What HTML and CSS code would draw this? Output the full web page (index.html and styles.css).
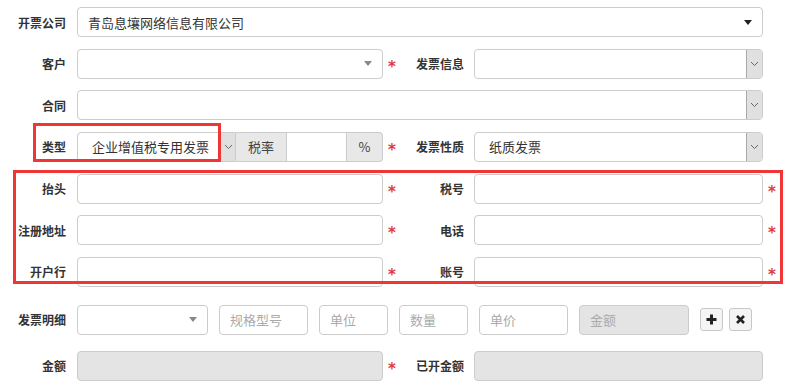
FILE: index.html
```html
<!DOCTYPE html>
<html lang="zh-CN">
<head>
    <meta charset="UTF-8">
    <title>开票</title>
    <link rel="stylesheet" href="styles.css">
</head>
<body>
    <div class="invoice-form">
        <div class="row">
            <label class="lbl c1">开票公司</label>
            <div class="ctl wide select2"><span class="val">青岛息壤网络信息有限公司</span><span class="caret dark"></span></div>
        </div>

        <div class="row">
            <label class="lbl c1">客户</label>
            <div class="ctl c2 select2"><span class="val"></span><span class="caret"></span></div>
            <span class="req c3">*</span>
            <label class="lbl lbl-r c4">发票信息</label>
            <div class="ctl c5 native"><span class="val"></span><span class="chev"><svg width="9" height="6" viewBox="0 0 9 6"><polyline points="1,1 4.5,4.5 8,1" fill="none" stroke="#666" stroke-width="1"/></svg></span></div>
        </div>

        <div class="row">
            <label class="lbl c1">合同</label>
            <div class="ctl wide native"><span class="val"></span><span class="chev"><svg width="9" height="6" viewBox="0 0 9 6"><polyline points="1,1 4.5,4.5 8,1" fill="none" stroke="#666" stroke-width="1"/></svg></span></div>
        </div>

        <div class="row">
            <label class="lbl c1">类型</label>
            <div class="group c2">
                <div class="ctl native type-sel"><span class="val">企业增值税专用发票</span><span class="chev"><svg width="9" height="6" viewBox="0 0 9 6"><polyline points="1,1 4.5,4.5 8,1" fill="none" stroke="#666" stroke-width="1"/></svg></span></div>
                <span class="addon rate-lbl">税率</span>
                <div class="ctl rate-in"></div>
                <span class="addon pct">%</span>
            </div>
            <span class="req c3">*</span>
            <label class="lbl lbl-r c4">发票性质</label>
            <div class="ctl c5 native"><span class="val">纸质发票</span><span class="chev"><svg width="9" height="6" viewBox="0 0 9 6"><polyline points="1,1 4.5,4.5 8,1" fill="none" stroke="#666" stroke-width="1"/></svg></span></div>
        </div>

        <div class="row">
            <label class="lbl c1">抬头</label>
            <div class="ctl c2"></div>
            <span class="req c3">*</span>
            <label class="lbl lbl-r c4">税号</label>
            <div class="ctl c5"></div>
            <span class="req c6">*</span>
        </div>

        <div class="row">
            <label class="lbl c1">注册地址</label>
            <div class="ctl c2"></div>
            <span class="req c3">*</span>
            <label class="lbl lbl-r c4">电话</label>
            <div class="ctl c5"></div>
            <span class="req c6">*</span>
        </div>

        <div class="row">
            <label class="lbl c1">开户行</label>
            <div class="ctl c2"></div>
            <span class="req c3">*</span>
            <label class="lbl lbl-r c4">账号</label>
            <div class="ctl c5"></div>
            <span class="req c6">*</span>
        </div>

        <div class="row detail-row">
            <label class="lbl c1">发票明细</label>
            <div class="detail">
                <div class="ctl select2 d-item"><span class="val"></span><span class="caret"></span></div>
                <div class="ctl d-spec"><span class="ph">规格型号</span></div>
                <div class="ctl d-unit"><span class="ph">单位</span></div>
                <div class="ctl d-unit"><span class="ph">数量</span></div>
                <div class="ctl d-spec"><span class="ph">单价</span></div>
                <div class="ctl off d-sum"><span class="ph">金额</span></div>
                <button class="icon-btn add"><svg width="11" height="11" viewBox="0 0 11 11"><path d="M5.5 0.5v10M0.5 5.5h10" stroke="#222" stroke-width="3"/></svg></button>
                <button class="icon-btn del"><svg width="9" height="9" viewBox="0 0 9 9"><path d="M1 1l7 7M8 1l-7 7" stroke="#222" stroke-width="2.6"/></svg></button>
            </div>
        </div>

        <div class="row total-row">
            <label class="lbl c1">金额</label>
            <div class="ctl c2 off"></div>
            <span class="req c3">*</span>
            <label class="lbl lbl-r c4">已开金额</label>
            <div class="ctl c5 off"></div>
        </div>

        <!-- annotation frames -->
        <div class="mark mark-type"></div>
        <div class="mark mark-title"></div>
    </div>
</body>
</html>
```

FILE: styles.css
```css
* {
    margin: 0;
    padding: 0;
    box-sizing: border-box;
}

body {
    font-family: "Noto Sans CJK SC", "Liberation Sans", sans-serif;
    background: #fff;
    color: #333;
    width: 804px;
    height: 389px;
    overflow: hidden;
}

.invoice-form {
    position: relative;
    padding-top: 7px;
}

.row {
    display: grid;
    grid-template-columns: 77px 306px 22px 69px 289px 22px;
    height: 30px;
    margin-bottom: 11.67px;
    align-items: center;
}

.detail-row {
    margin-top: 18px;
    margin-bottom: 16px;
}

.c1 { grid-column: 1; }
.c2 { grid-column: 2; }
.c3 { grid-column: 3; }
.c4 { grid-column: 4; }
.c5 { grid-column: 5; }
.c6 { grid-column: 6; }
.wide { grid-column: 2 / 6; }

.lbl {
    font-size: 12px;
    font-weight: bold;
    color: #333;
    text-align: right;
    padding-right: 11px;
    white-space: nowrap;
}

.lbl-r {
    padding-right: 10px;
}

.req {
    color: #e03b3b;
    font-family: "DejaVu Sans", sans-serif;
    font-weight: bold;
    font-size: 15px;
    padding-left: 5px;
    line-height: 1;
    padding-top: 7px;
}

.ctl {
    height: 30px;
    border: 1px solid #ccc;
    border-radius: 4px;
    background: #fff;
    display: flex;
    align-items: center;
    font-size: 13px;
    color: #333;
    position: relative;
}

.ctl .val {
    flex: 1;
    padding-left: 10px;
    white-space: nowrap;
    overflow: hidden;
}

.native .val {
    padding-left: 14px;
}

.ctl.off {
    background: #e4e4e4;
}

.ph {
    color: #aaa;
    padding-left: 10px;
    white-space: nowrap;
}

.caret {
    width: 0;
    height: 0;
    border-left: 4px solid transparent;
    border-right: 4px solid transparent;
    border-top: 5px solid #888;
    margin-right: 10px;
}

.caret.dark {
    border-top-color: #222;
}

.chev {
    width: 16px;
    height: 100%;
    background: #e0e0e0;
    border-left: 1px solid #a9a9a9;
    border-radius: 0 3px 3px 0;
    display: flex;
    align-items: center;
    justify-content: center;
}

.group {
    display: flex;
    height: 30px;
}

.type-sel {
    width: 159px;
    border-radius: 4px 0 0 4px;
}

.type-sel .chev {
    border-radius: 0;
    width: 15px;
}

.addon {
    background: #e8e8e8;
    border: 1px solid #ccc;
    border-left: none;
    font-size: 13px;
    color: #444;
    display: flex;
    align-items: center;
    justify-content: center;
}

.rate-lbl {
    width: 51px;
}

.rate-in {
    width: 60px;
    border-radius: 0;
    border-left: none;
}

.pct {
    width: 36px;
    border-radius: 0 4px 4px 0;
}

.detail {
    grid-column: 2 / 7;
    display: flex;
    align-items: center;
    gap: 11px;
}

.d-item {
    width: 131px;
}

.d-spec {
    width: 89px;
}

.d-unit {
    width: 69px;
}

.d-sum {
    width: 110px;
}

.icon-btn {
    width: 23px;
    height: 23px;
    border: 1px solid #c8c8c8;
    border-radius: 3px;
    background: #f4f4f4;
    display: flex;
    align-items: center;
    justify-content: center;
}

.icon-btn.del {
    margin-left: -5px;
}

.mark {
    position: absolute;
    border: 3px solid #f03535;
}

.mark-type {
    left: 33px;
    top: 123px;
    width: 188px;
    height: 39px;
}

.mark-title {
    left: 13px;
    top: 170px;
    width: 770px;
    height: 114px;
}
```
